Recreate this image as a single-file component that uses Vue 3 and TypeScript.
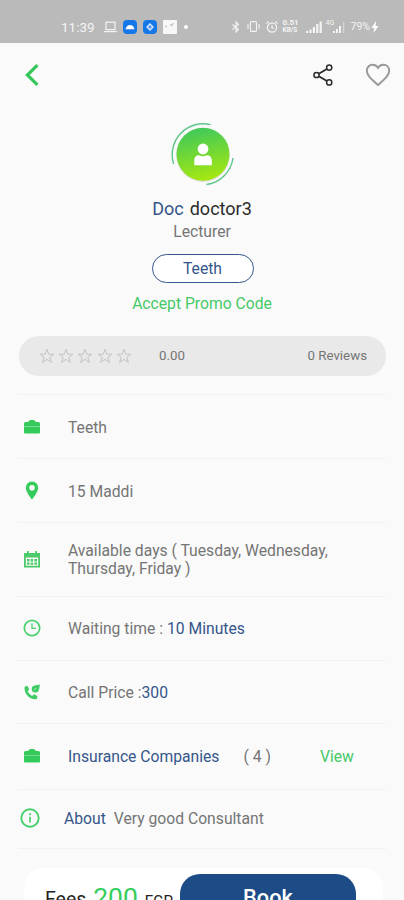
<script setup lang="ts">
type IconName = 'case' | 'pin' | 'calendar' | 'clock' | 'call' | 'about'

interface InfoRow {
  icon: IconName
  height: number
  label?: string
  text?: string
  value?: string
  count?: number
}

const rows: InfoRow[] = [
  { icon: 'case', height: 64, text: 'Teeth' },
  { icon: 'pin', height: 64, text: '15 Maddi' },
  { icon: 'calendar', height: 74, text: 'Available days ( Tuesday, Wednesday, Thursday, Friday )' },
  { icon: 'clock', height: 64, text: 'Waiting time : ', value: '10 Minutes' },
  { icon: 'call', height: 63, text: 'Call Price :', value: '300' },
  { icon: 'case', height: 66, label: 'Insurance Companies', count: 4 },
  { icon: 'about', height: 59, label: 'About', text: 'Very good Consultant' },
]
</script>

<template>
  <div class="screen">
    <header class="status">
      <div class="status-left">
        <span class="time">11:39</span>
        <svg width="13" height="12" viewBox="0 0 13 12" fill="none" stroke="#f4f4f4" stroke-width="1.2"><rect x="2" y="1.2" width="9" height="7.4" /><path d="M0 10.6h13" /></svg>
        <svg width="14" height="14" viewBox="0 0 14 14"><rect width="14" height="14" rx="4" fill="#1677e8" /><path d="M2.5 9.3C3 6.500 5 5 7 5s4 1.500 4.500 4.300z" fill="#fff" /></svg>
        <svg width="14" height="14" viewBox="0 0 14 14"><rect width="14" height="14" rx="4" fill="#1677e8" /><path d="M7 3l4 4-4 4-4-4z" fill="#cfe4ff" /><path d="M7 5.500v3M5.500 7h3" stroke="#1677e8" /></svg>
        <svg width="14" height="14" viewBox="0 0 14 14"><rect width="14" height="14" rx="1" fill="#f7f7f7" /><path d="M7 5l4-1.500M2 6l2 1M8 6l2-1" stroke="#bbb" /></svg>
        <span class="dot"></span>
      </div>
      <div class="status-right">
        <svg width="8" height="12" viewBox="0 0 8 12" fill="none" stroke="#f4f4f4" stroke-width="1.100"><path d="M0.500 3.500l6 5L4 11V1l2.500 2.500-6 5" /></svg>
        <svg class="vibrate" width="13" height="11" viewBox="0 0 13 11" fill="none" stroke="#f4f4f4" stroke-width="1.100"><rect x="3.500" y="0.600" width="6" height="9.800" rx="1" /><path d="M1 3v5M12 3v5" /></svg>
        <svg class="alarm" width="12" height="12" viewBox="0 0 12 12" fill="none" stroke="#f4f4f4" stroke-width="1.200"><circle cx="6" cy="6.500" r="4.600" /><path d="M6 4v3h2M0.500 2.500l2-2M11.500 2.500l-2-2" /></svg>
        <span class="speed"><b>0.51</b><b class="unit">KB/S</b></span>
        <svg class="signal" width="16" height="12" viewBox="0 0 16 12" fill="#f4f4f4"><path d="M0 10h2.200v2H0zM3.400 8.500h2.200V12H3.400zM6.800 6H9v6H6.800zM10.200 3h2.200v9h-2.200zM13.600 0.500h2.200V12h-2.200z" /></svg>
        <span class="net">4G</span>
        <svg class="signal2" width="12" height="12" viewBox="0 0 12 12" fill="#f4f4f4"><path d="M0 10h2v2H0zM3 8h2v4H3zM6 5h2v7H6z" /><path d="M10 1h1.300v11H10z" opacity=".5" /></svg>
        <span class="battery">79%</span>
        <svg class="bolt" width="8" height="12" viewBox="0 0 8 12" fill="#fff"><path d="M5 0L0.500 7h2.800L2.500 12 7.500 5H4.600z" /></svg>
      </div>
    </header>

    <nav class="toolbar">
      <svg width="14" height="22" viewBox="0 0 14 22" fill="none" stroke="#35c759" stroke-width="3.200"><path d="M12.400 1.200L2.400 11l10 9.800" /></svg>
      <svg class="share" width="20" height="22" viewBox="0 0 20 22" fill="none" stroke="#2a2a2a" stroke-width="1.500"><circle cx="3.500" cy="11" r="2.600" /><circle cx="16.200" cy="3.600" r="2.600" /><circle cx="16.200" cy="18.400" r="2.600" /><path d="M5.800 9.700l8.100-4.700M5.800 12.300l8.100 4.700" stroke-width="1.800" /></svg>
      <svg class="heart" width="26" height="24" viewBox="0 0 26 24" fill="none" stroke="#9a9a9a" stroke-width="2"><path d="M13 22C6 15.600 1.800 12.200 1.800 7.700 1.800 4.200 4.400 1.800 7.500 1.800c2.200 0 4.300 1.100 5.500 3 1.200-1.900 3.300-3 5.500-3 3.100 0 5.700 2.400 5.700 5.900C24.200 12.200 20 15.600 13 22z" /></svg>
    </nav>

    <section class="profile">
      <svg class="avatar" width="64" height="64" viewBox="0 0 64 64">
        <defs>
          <linearGradient id="avatarFill" x1="0.400" y1="0" x2="0.600" y2="1">
            <stop offset="0" stop-color="#3fc95a" />
            <stop offset="1" stop-color="#a8e80f" />
          </linearGradient>
        </defs>
        <circle cx="32" cy="33.200" r="26.700" fill="#d9dcd9" />
        <circle cx="32" cy="32.200" r="26.500" fill="url(#avatarFill)" />
        <path d="M2.600 42A31 31 0 0 1 39.500 2.600M62 36A31 31 0 0 1 35.500 62.500" fill="none" stroke="#5cc489" stroke-width="1.400" />
        <circle cx="32" cy="27" r="5.400" fill="#fff" />
        <path d="M23.300 43.300V38.500C23.300 35 25.500 33.200 28 33.200c2.400 1.300 5.600 1.300 8 0 2.500 0 4.800 1.800 4.800 5.300V43.300z" fill="#fff" />
      </svg>
      <h1 class="name"><span class="blue">Doc</span> doctor3</h1>
      <p class="role">Lecturer</p>
      <span class="tag">Teeth</span>
      <p class="promo">Accept Promo Code</p>
    </section>

    <section class="rating">
      <svg v-for="n in 5" :key="n" class="star" width="16" height="16" viewBox="0 0 16 16" fill="none" stroke="#c4c4c4"><path d="M8 1.200l1.800 5h5.200l-4.200 3.100 1.600 5.200L8 11.300l-4.400 3.200 1.600-5.200L1 6.200h5.200z" /></svg>
      <span class="score">0.00</span>
      <span class="reviews">0 Reviews</span>
    </section>

    <ul class="info">
      <li v-for="(row, i) in rows" :key="i" :class="['row', row.icon]" :style="{ height: row.height + 'px' }">
        <span class="icon">
          <svg v-if="row.icon === 'case'" width="16" height="16" viewBox="0 0 16 16" fill="#34cb5b"><path d="M4 3L6 1h4l2 2h2.500Q16 3 16 4.500V7H0V4.500Q0 3 1.500 3z" /><path d="M0 6.500h16V8H0z" opacity=".55" /><path d="M0 7.800h16v5.700q0 1-1 1H1q-1 0-1-1z" /></svg>
          <svg v-else-if="row.icon === 'pin'" width="14" height="19" viewBox="0 0 14 19" fill="#34cb5b" fill-rule="evenodd"><path d="M7 .5A6.200 6.200 0 0 0 .8 6.700C.8 11 7 18.500 7 18.500S13.200 11 13.200 6.700A6.200 6.200 0 0 0 7 .5zM7 4a2.800 2.800 0 1 1 0 5.600A2.800 2.800 0 0 1 7 4z" /></svg>
          <svg v-else-if="row.icon === 'calendar'" width="16" height="17" viewBox="0 0 16 17" fill="#4bca6a"><path fill-rule="evenodd" d="M3 0h1.800v2h6.400V0H13v2h3v14.500H0V2h3zM1.800 6.500v8.300h12.400V6.500z" /><path d="M3 8h2.500v2.500H3zM6.600 8h2.600v2.500H6.600zM10.400 8H13v2.500h-2.600zM3 11.500h2.500v2.300H3zM6.600 11.500h2.600v2.300H6.600zM10.400 11.500H13v2.300h-2.600z" /></svg>
          <svg v-else-if="row.icon === 'clock'" width="18" height="18" viewBox="0 0 18 18" fill="none" stroke="#4fd070" stroke-width="1.700"><circle cx="9" cy="9" r="7.700" /><path d="M9 4.200V9.300h4" stroke-width="1.300" /></svg>
          <svg v-else-if="row.icon === 'call'" width="16" height="16" viewBox="0 0 16 16" fill="#3fcc64"><path d="M.8 2.500L3.600 2 5.200 5.600 3.700 7.300C4.700 9.300 6 10.700 8.200 11.900L10 10.300l3.400 1.700-.5 2.900C6 16.700-.8 9 .8 2.500z" /><circle cx="11.300" cy="5" r="3.600" /><path d="M11 1.500L16 .5l-1 5z" /><path d="M10 6.300l2.400-2.400" stroke="#b5ecc3" /></svg>
          <svg v-else width="20" height="20" viewBox="0 0 20 20" fill="none" stroke="#45cf69" stroke-width="1.900"><circle cx="10" cy="10" r="8.700" /><path d="M10 8.800V14.500M10 5.300v1.900" stroke-width="1.700" /></svg>
        </span>
        <p class="content">
          <span v-if="row.label" class="blue label">{{ row.label }}</span>
          <template v-if="row.text">{{ row.text }}</template>
          <span v-if="row.value" class="blue">{{ row.value }}</span>
          <span v-if="row.count" class="count">( {{ row.count }} )</span>
        </p>
        <a v-if="row.count" class="view">View</a>
      </li>
    </ul>

    <footer class="booking">
      <div class="fees">Fees <span class="amount">200</span> <span class="currency">EGP</span></div>
      <button class="book">Book</button>
    </footer>
  </div>
</template>

<style>
body {
  margin: 0;
  background: #fafafa;
}
</style>

<style scoped>
.screen {
  width: 404px;
  height: 900px;
  overflow: hidden;
  display: flex;
  flex-direction: column;
  background: #fafafa;
  color: #757575;
  font-family: Roboto, 'Liberation Sans', sans-serif;
  font-size: 15.700px;
}
svg { display: block; flex: none; }
h1, p, ul { margin: 0; padding: 0; font-weight: 400; }
.status {
  flex: none;
  box-sizing: border-box;
  height: 43px;
  padding: 10px 25px 0 61px;
  display: flex;
  justify-content: space-between;
  align-items: center;
  background: #bababa;
  color: #f4f4f4;
}
.status-left, .status-right { display: flex; align-items: center; }
.status-left { gap: 6px; }
.time { width: 37px; font-size: 13.500px; }
.dot { width: 4px; height: 4px; border-radius: 50%; background: #fff; margin-left: 1px; }
.vibrate { margin-left: 7px; }
.alarm { margin-left: 6px; }
.speed { display: flex; flex-direction: column; width: 18px; margin-left: 5px; font-size: 8px; line-height: 8px; }
.unit { font-size: 6.500px; line-height: 7px; }
.signal { margin-left: 5px; }
.net { width: 12px; height: 13px; margin-left: 4px; font-size: 7px; line-height: 7px; }
.signal2 { margin-left: -5px; }
.battery { margin-left: 6px; font-size: 10.500px; }
.bolt { margin-left: 1px; }
.toolbar { flex: none; height: 63px; display: flex; align-items: center; padding: 0 13px 0 25px; }
.share { margin-left: auto; margin-right: 32px; }
.profile { flex: none; height: 230px; display: flex; flex-direction: column; align-items: center; }
.avatar { margin: 16px 0 0 1px; }
.name { margin-top: 12px; font-size: 18px; line-height: 22px; color: #2b2b2b; word-spacing: 1.500px; }
.blue { color: #35568a; }
.role { margin-top: 2px; line-height: 20px; }
.tag {
  box-sizing: border-box;
  width: 102px;
  height: 29px;
  margin: 12px 0 0 1px;
  border: 1.500px solid #35568a;
  border-radius: 15px;
  background: #fff;
  color: #35568a;
  text-align: center;
  line-height: 28px;
}
.promo { margin-top: 11px; line-height: 20px; color: #45c968; }
.rating {
  flex: none;
  box-sizing: border-box;
  height: 40px;
  margin: 0 18px 0 19px;
  padding: 0 19px 0 20px;
  display: flex;
  align-items: center;
  gap: 3.200px;
  border-radius: 20px;
  background: #e9e9e9;
  font-size: 13.300px;
}
.score { margin-left: 24px; padding-bottom: 2px; }
.reviews { margin-left: auto; padding-bottom: 1px; }
.info { margin: 18px 18px 0; border-top: 1px solid #f1f1f1; list-style: none; }
.row { box-sizing: border-box; display: flex; align-items: center; border-bottom: 1px solid #f1f1f1; }
.icon { flex: none; width: 28px; display: flex; justify-content: center; }
.content { width: 275px; margin-left: 22px; line-height: 18px; }
.content, .view { padding-top: 2px; }
.calendar .content { padding-top: 1px; }
.clock, .about, .row:nth-child(6) { padding-bottom: 2px; }
.view { margin-left: -23px; line-height: 18px; color: #45c968; }
.label { margin-right: 4px; }
.count { margin-left: 20px; }
.about .icon { width: 24px; }
.about .label { margin-right: 8px; }
.booking {
  flex: none;
  box-sizing: border-box;
  height: 60px;
  margin: 19px 21px 0 24px;
  padding: 6px 27px 0 21px;
  display: flex;
  border-radius: 20px;
  background: #fff;
}
.fees { width: 135px; flex: none; white-space: nowrap; font-size: 19.500px; line-height: 45px; color: #222; }
.amount { margin: 0 2px 0 2px; font-size: 26.500px; color: #35cd5c; }
.currency { font-size: 15px; }
.book {
  flex: 1;
  height: 48px;
  padding: 0;
  border: 0;
  border-radius: 20px;
  background: #1c4b86;
  color: #fff;
  font: 500 21.800px/46px Roboto, 'Liberation Sans', sans-serif;
}
</style>
